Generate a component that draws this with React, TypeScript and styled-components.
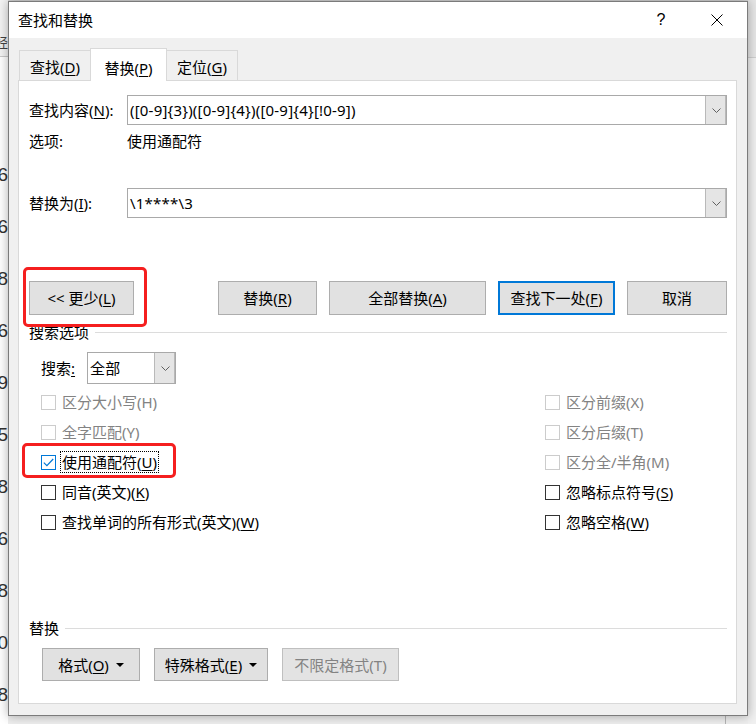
import React from "react";
import styled, { createGlobalStyle } from "styled-components";

const GlobalStyle = createGlobalStyle`
  html, body {
    margin: 0;
    padding: 0;
  }
  body {
    background: #f0f0f0;
    font-family: "Noto Sans", "Noto Sans CJK SC", sans-serif;
    color: #000;
  }
`;

const Desktop = styled.div`
  display: flex;
  width: 756px;
  height: 724px;
  overflow: hidden;
  background: #f0f0f0;
`;

const DocStrip = styled.div`
  flex: none;
  width: 8px;
  display: flex;
  flex-direction: column;
  background: #fff;
  overflow: hidden;
`;

const Ribbon = styled.div`
  flex: none;
  height: 57px;
  box-sizing: border-box;
  background: #f3f3f3;
  border-bottom: 1px solid #c9c9c9;
  display: flex;
  justify-content: flex-end;
  align-items: flex-end;
  padding-bottom: 6px;
  font-size: 13px;
  line-height: 16px;
  color: #444;
`;

const DocBody = styled.div`
  padding-top: 92px;
  display: flex;
  flex-direction: column;
`;

const DocLine = styled.div`
  height: 52px;
  display: flex;
  justify-content: flex-end;
  align-items: center;
  white-space: nowrap;
  font-family: "Liberation Sans", sans-serif;
  font-size: 19px;
  color: #333;
`;

const Column = styled.div`
  flex: none;
  width: 740px;
  display: flex;
  flex-direction: column;
`;

const TopGap = styled.div`
  height: 1px;
  background: #d6d6d6;
`;

const BottomGap = styled.div`
  flex: 1;
  display: flex;
  padding-left: 717px;
  background: #eeeeee;
`;

const GapLine = styled.div`
  width: 1px;
  background: #b4b4b4;
`;

const RightStrip = styled.div`
  flex: none;
  width: 8px;
  display: flex;
  flex-direction: column;
  background: #f0f0f0;
`;

const RightTop = styled.div`
  height: 57px;
  background: #e6e6e6;
  border-bottom: 1px solid #cfcfcf;
`;

const Dialog = styled.div`
  position: relative;
  z-index: 1;
  height: 715px;
  box-sizing: border-box;
  border: 1px solid #7b7b7b;
  box-shadow: 0 0 10px rgba(0, 0, 0, 0.32);
  background: #f0f0f0;
  display: flex;
  flex-direction: column;
  font-size: 15px;
  line-height: 20px;
`;

const TitleBar = styled.div`
  flex: none;
  height: 36px;
  background: #fff;
  display: flex;
  align-items: center;
  padding: 0 2px 0 9px;
`;

const Title = styled.div`
  font-size: 15px;
  flex: 1;
`;

const TitleButton = styled.div`
  width: 56px;
  height: 36px;
  display: flex;
  align-items: center;
  justify-content: center;
  font-size: 16px;
  font-family: "Liberation Sans", sans-serif;
`;

const Body = styled.div`
  flex: 1;
  display: flex;
  flex-direction: column;
  padding: 10px 10px 0 9px;
`;

const TabRow = styled.div`
  height: 32px;
  display: flex;
  align-items: flex-end;
  padding-left: 1px;
`;

const Tab = styled.div<{ $w: number; $active?: boolean }>`
  position: relative;
  z-index: ${({ $active }) => ($active ? 2 : 0)};
  width: ${({ $w }) => $w}px;
  height: ${({ $active }) => ($active ? 33 : 30)}px;
  margin-bottom: ${({ $active }) => ($active ? -1 : 0)}px;
  box-sizing: border-box;
  border: 1px solid #d9d9d9;
  border-bottom: none;
  background: ${({ $active }) => ($active ? "#fff" : "#f0f0f0")};
  display: flex;
  align-items: center;
  justify-content: center;
  padding-top: ${({ $active }) => ($active ? 5 : 3)}px;
  & + & {
    margin-left: -1px;
  }
`;

const Panel = styled.div`
  height: 624px;
  box-sizing: border-box;
  border: 1px solid #d9d9d9;
  background: #fff;
  padding: 14px 9px 0 10px;
  display: flex;
  flex-direction: column;
`;

const FieldRow = styled.div<{ $top?: number; $h?: number }>`
  display: grid;
  grid-template-columns: 98px 1fr;
  align-items: center;
  height: ${({ $h }) => $h ?? 30}px;
  margin-top: ${({ $top }) => $top ?? 0}px;
`;

const Mn = styled.span`
  text-decoration: underline;
  text-underline-offset: 2px;
  text-decoration-thickness: 1px;
`;

const Combo = styled.div<{ $w?: number; $h?: number }>`
  height: ${({ $h }) => $h ?? 30}px;
  width: ${({ $w }) => ($w ? `${$w}px` : "auto")};
  box-sizing: border-box;
  border: 1px solid #a9a9a9;
  background: #fff;
  display: flex;
  align-items: stretch;
`;

const ComboText = styled.div`
  flex: 1;
  display: flex;
  align-items: center;
  padding-left: 2px;
  white-space: nowrap;
  overflow: hidden;
  letter-spacing: 0.2px;
`;

const ComboArrow = styled.div`
  width: 20px;
  flex: none;
  background: #e5e5e5;
  border-left: 1px solid #b9b9b9;
  box-shadow: inset -1px 0 0 #b9b9b9;
  display: flex;
  align-items: center;
  justify-content: center;
`;

const ButtonRow = styled.div`
  display: flex;
  margin-top: 63px;
  height: 34px;
`;

const ButtonGroup = styled.div<{ $gap: number }>`
  display: flex;
  gap: ${({ $gap }) => $gap}px;
  margin-left: auto;
`;

const Button = styled.div<{ $w: number; $default?: boolean; $disabled?: boolean }>`
  width: ${({ $w }) => $w}px;
  height: 100%;
  box-sizing: border-box;
  background: ${({ $disabled }) => ($disabled ? "#e3e3e3" : "#e1e1e1")};
  border: ${({ $default, $disabled }) =>
    $default ? "2px solid #0078d7" : $disabled ? "1px solid #bfbfbf" : "1px solid #adadad"};
  color: ${({ $disabled }) => ($disabled ? "#838383" : "#000")};
  display: flex;
  align-items: center;
  justify-content: center;
  gap: 7px;
  white-space: nowrap;
`;

const HighlightWrap = styled.div`
  position: relative;
  display: flex;
  justify-self: start;
`;

const Highlight = styled.div<{ $t: number; $r: number; $b: number; $l: number }>`
  position: absolute;
  top: ${({ $t }) => $t}px;
  right: ${({ $r }) => $r}px;
  bottom: ${({ $b }) => $b}px;
  left: ${({ $l }) => $l}px;
  border: 3px solid #f51f1f;
  border-radius: 5px;
  pointer-events: none;
`;

const GroupHeader = styled.div<{ $top: number }>`
  display: flex;
  align-items: center;
  height: 20px;
  margin-top: ${({ $top }) => $top}px;
`;

const GroupLine = styled.div`
  flex: 1;
  height: 1px;
  background: #dcdcdc;
  margin-left: 6px;
`;

const SearchRow = styled.div`
  display: flex;
  align-items: center;
  height: 32px;
  margin-top: 10px;
  padding-left: 12px;
`;

const SearchLabel = styled.div`
  width: 46px;
`;

const CheckGrid = styled.div`
  display: grid;
  grid-template-columns: 504px 1fr;
  grid-auto-rows: 30px;
  margin-top: 3px;
  padding-left: 12px;
`;

const CheckItem = styled.div<{ $disabled?: boolean }>`
  display: inline-flex;
  align-items: center;
  justify-self: start;
  color: ${({ $disabled }) => ($disabled ? "#838383" : "#000")};
`;

const Box = styled.div<{ $state: "on" | "off" | "disabled" }>`
  width: 15px;
  height: 15px;
  box-sizing: border-box;
  flex: none;
  border: 1px solid
    ${({ $state }) => ($state === "on" ? "#0078d7" : $state === "disabled" ? "#cccccc" : "#333333")};
  background: #fff;
  display: flex;
  align-items: center;
  justify-content: center;
  margin-right: 4px;
`;

const CheckText = styled.span<{ $focus?: boolean }>`
  border: 1px dotted ${({ $focus }) => ($focus ? "#000" : "transparent")};
  padding: 0 1px;
  white-space: nowrap;
`;

const BottomButtons = styled.div`
  display: flex;
  height: 33px;
  margin-top: 10px;
  padding-left: 13px;
  gap: 14px;
`;

const Chevron = () => (
  <svg width="9" height="5" viewBox="0 0 9 5">
    <path d="M0.5 0.5 L4.5 4.5 L8.5 0.5" fill="none" stroke="#606060" strokeWidth="1" />
  </svg>
);

const Caret = () => (
  <svg width="8" height="4" viewBox="0 0 8 4">
    <path d="M0 0 H8 L4 4 Z" fill="#000" />
  </svg>
);

const Tick = () => (
  <svg width="11" height="9" viewBox="0 0 11 9">
    <path d="M0.8 4.6 L3.9 7.6 L10.2 1" fill="none" stroke="#0078d7" strokeWidth="1.2" />
  </svg>
);

const CloseIcon = () => (
  <svg width="12" height="12" viewBox="0 0 12 12">
    <path d="M0.5 0.5 L11.5 11.5 M11.5 0.5 L0.5 11.5" stroke="#000" strokeWidth="1" />
  </svg>
);

type Check = {
  label: React.ReactNode;
  state: "on" | "off" | "disabled";
  focus?: boolean;
};

const Checkbox = ({ label, state, focus }: Check) => (
  <CheckItem $disabled={state === "disabled"}>
    <Box $state={state}>{state === "on" && <Tick />}</Box>
    <CheckText $focus={focus}>{label}</CheckText>
  </CheckItem>
);

const docDigits = ["06", "56", "58", "56", "99", "95", "38", "56", "58", "50", "58"];

export default function App() {
  return (
    <>
      <GlobalStyle />
      <Desktop>
        <DocStrip>
          <Ribbon>经</Ribbon>
          <DocBody>
            {docDigits.map((d, i) => (
              <DocLine key={i}>{d}</DocLine>
            ))}
          </DocBody>
        </DocStrip>
        <Column>
          <TopGap />
          <Dialog>
            <TitleBar>
              <Title>查找和替换</Title>
              <TitleButton>?</TitleButton>
              <TitleButton>
                <CloseIcon />
              </TitleButton>
            </TitleBar>
            <Body>
              <TabRow>
                <Tab $w={72}>
                  <span>
                    查找(<Mn>D</Mn>)
                  </span>
                </Tab>
                <Tab $w={77} $active>
                  <span>
                    替换(<Mn>P</Mn>)
                  </span>
                </Tab>
                <Tab $w={72}>
                  <span>
                    定位(<Mn>G</Mn>)
                  </span>
                </Tab>
              </TabRow>
              <Panel>
                <FieldRow>
                  <div>
                    查找内容(<Mn>N</Mn>):
                  </div>
                  <Combo>
                    <ComboText>([0-9]{"{3}"})([0-9]{"{4}"})([0-9]{"{4}"}[!0-9])</ComboText>
                    <ComboArrow>
                      <Chevron />
                    </ComboArrow>
                  </Combo>
                </FieldRow>
                <FieldRow $top={6} $h={20}>
                  <div>选项:</div>
                  <div>使用通配符</div>
                </FieldRow>
                <FieldRow $top={37}>
                  <div>
                    替换为(<Mn>I</Mn>):
                  </div>
                  <Combo>
                    <ComboText>{"\\1****\\3"}</ComboText>
                    <ComboArrow>
                      <Chevron />
                    </ComboArrow>
                  </Combo>
                </FieldRow>

                <ButtonRow>
                  <HighlightWrap>
                    <Button $w={105}>
                      <span>
                        {"<< 更少("}
                        <Mn>L</Mn>)
                      </span>
                    </Button>
                    <Highlight $t={-14} $r={-13} $b={-12} $l={-6} />
                  </HighlightWrap>
                  <ButtonGroup $gap={12}>
                    <Button $w={99}>
                      <span>
                        替换(<Mn>R</Mn>)
                      </span>
                    </Button>
                    <Button $w={157}>
                      <span>
                        全部替换(<Mn>A</Mn>)
                      </span>
                    </Button>
                    <Button $w={117} $default>
                      <span>
                        查找下一处(<Mn>F</Mn>)
                      </span>
                    </Button>
                    <Button $w={100}>取消</Button>
                  </ButtonGroup>
                </ButtonRow>

                <GroupHeader $top={7}>
                  搜索选项
                  <GroupLine />
                </GroupHeader>

                <SearchRow>
                  <SearchLabel>
                    搜索<Mn>:</Mn>
                  </SearchLabel>
                  <Combo $w={89} $h={32}>
                    <ComboText>全部</ComboText>
                    <ComboArrow>
                      <Chevron />
                    </ComboArrow>
                  </Combo>
                </SearchRow>

                <CheckGrid>
                  <Checkbox state="disabled" label="区分大小写(H)" />
                  <Checkbox state="disabled" label="区分前缀(X)" />
                  <Checkbox state="disabled" label="全字匹配(Y)" />
                  <Checkbox state="disabled" label="区分后缀(T)" />
                  <HighlightWrap>
                    <Checkbox
                      state="on"
                      focus
                      label={
                        <>
                          使用通配符(<Mn>U</Mn>)
                        </>
                      }
                    />
                    <Highlight $t={-4} $r={-17} $b={-1} $l={-19} />
                  </HighlightWrap>
                  <Checkbox state="disabled" label="区分全/半角(M)" />
                  <Checkbox
                    state="off"
                    label={
                      <>
                        同音(英文)(<Mn>K</Mn>)
                      </>
                    }
                  />
                  <Checkbox
                    state="off"
                    label={
                      <>
                        忽略标点符号(<Mn>S</Mn>)
                      </>
                    }
                  />
                  <Checkbox
                    state="off"
                    label={
                      <>
                        查找单词的所有形式(英文)(<Mn>W</Mn>)
                      </>
                    }
                  />
                  <Checkbox
                    state="off"
                    label={
                      <>
                        忽略空格(<Mn>W</Mn>)
                      </>
                    }
                  />
                </CheckGrid>

                <GroupHeader $top={81}>
                  替换
                  <GroupLine />
                </GroupHeader>

                <BottomButtons>
                  <Button $w={98}>
                    <span>
                      格式(<Mn>O</Mn>)
                    </span>
                    <Caret />
                  </Button>
                  <Button $w={114}>
                    <span>
                      特殊格式(<Mn>E</Mn>)
                    </span>
                    <Caret />
                  </Button>
                  <Button $w={117} $disabled>
                    不限定格式(T)
                  </Button>
                </BottomButtons>
              </Panel>
            </Body>
          </Dialog>
          <BottomGap>
            <GapLine />
          </BottomGap>
        </Column>
        <RightStrip>
          <RightTop />
        </RightStrip>
      </Desktop>
    </>
  );
}
